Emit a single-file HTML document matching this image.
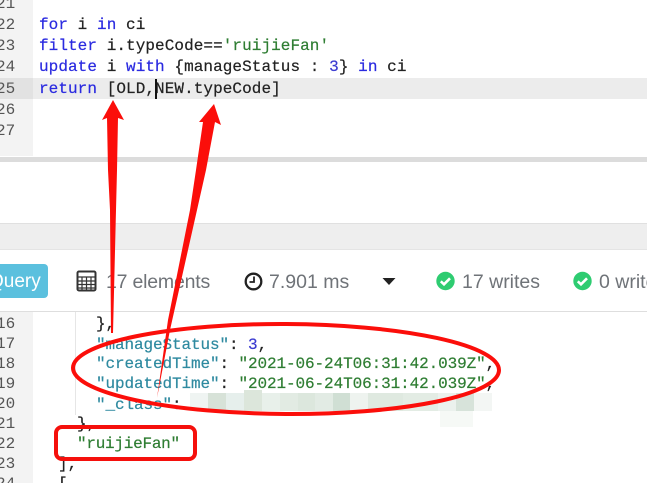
<!DOCTYPE html>
<html><head><meta charset="utf-8">
<style>
html,body{margin:0;padding:0;background:#fff}
#p{position:relative;width:647px;height:483px;overflow:hidden;background:#fff;filter:blur(.3px)}
.a{position:absolute}
.m{position:absolute;font-family:"Liberation Mono",monospace;font-size:16px;line-height:20px;white-space:pre;color:#222;-webkit-text-stroke:.2px currentColor}
.u{letter-spacing:.07px}.b{letter-spacing:-.1px}
.n{position:absolute;font-family:"Liberation Mono",monospace;font-size:16px;line-height:20px;color:#555;left:-4px}
.k{color:#2a2ae0}.s{color:#2e7d32}.j{color:#2f8aa0}.t{position:absolute;font-family:"Liberation Sans",sans-serif;font-size:19.5px;line-height:24px;color:#6f7378;white-space:pre}
</style></head><body><div id="p">
<div class="a" style="left:0;top:0;width:33px;height:156px;background:#f3f3f3"></div>
<div class="a" style="left:0;top:78px;width:647px;height:21px;background:#ececec"></div>
<div class="a" style="left:0;top:78px;width:33px;height:21px;background:#e2e2e2"></div>
<div class="a" style="left:0;top:157px;width:647px;height:5px;background:#dcdcdc"></div>
<div class="n" style="top:-6px">21</div><div class="n" style="top:15px">22</div><div class="n" style="top:36px">23</div><div class="n" style="top:57px">24</div><div class="n" style="top:79px">25</div><div class="n" style="top:100px">26</div><div class="n" style="top:121px">27</div>
<div class="m u" style="left:39px;top:15px"><span class="k">for</span> i <span class="k">in</span> ci</div>
<div class="m u" style="left:39px;top:36px"><span class="k">filter</span> i.typeCode==<span class="s">'ruijieFan'</span></div>
<div class="m u" style="left:39px;top:57px"><span class="k">update</span> i <span class="k">with</span> {manageStatus : <span style="color:#3a3ad0">3</span>} <span class="k">in</span> ci</div>
<div class="m u" style="left:39px;top:79px"><span class="k">return</span> [OLD,NEW.typeCode]</div>
<div class="a" style="left:155px;top:79px;width:1.5px;height:20px;background:#111"></div>

<div class="a" style="left:0;top:223px;width:647px;height:27px;background:#eeeeee;border-top:1px solid #e0e0e0;border-bottom:1px solid #e4e4e4;box-sizing:border-box"></div>
<div class="a" style="left:-20px;top:264px;width:68px;height:34px;background:#5bc0de;border-radius:4px"></div>
<div class="t" style="left:-11px;top:270px;color:#fff;font-size:19px">Query</div>
<svg class="a" style="left:76px;top:270px" width="22" height="23" viewBox="0 0 22 23"><rect x="1.5" y="1.5" width="18" height="19" rx="1.5" fill="none" stroke="#333" stroke-width="2"/><path d="M1 7h19M2 11h17M2 14.500h17M2 18h17M6 7v13M10.500 7v13M15 7v13" stroke="#333" stroke-width="1.200" fill="none"/></svg>
<div class="t" style="left:106px;top:270px;letter-spacing:-.2px">17 elements</div>
<svg class="a" style="left:244px;top:272px" width="19" height="19" viewBox="0 0 19 19"><circle cx="9.500" cy="9.500" r="7.800" fill="none" stroke="#222" stroke-width="2.300"/><path d="M10 4.500v5.500H5.500" fill="none" stroke="#222" stroke-width="1.800"/></svg>
<div class="t" style="left:269px;top:270px">7.901 ms</div>
<svg class="a" style="left:382px;top:277px" width="14" height="9"><path d="M0.500 1h13L7 8z" fill="#222"/></svg>
<svg class="a" style="left:436px;top:271px" width="19" height="20" viewBox="0 0 19 20"><circle cx="9.500" cy="10" r="9.200" fill="#2ecc71"/><path d="M4.800 10.300l3.200 3 6-6" fill="none" stroke="#fff" stroke-width="2.600"/></svg>
<div class="t" style="left:462px;top:270px">17 writes</div>
<svg class="a" style="left:573px;top:271px" width="19" height="20" viewBox="0 0 19 20"><circle cx="9.500" cy="10" r="9.200" fill="#2ecc71"/><path d="M4.800 10.300l3.200 3 6-6" fill="none" stroke="#fff" stroke-width="2.600"/></svg>
<div class="t" style="left:599px;top:270px">0 writes</div>
<div class="a" style="left:0;top:311px;width:647px;height:1px;background:#dedede"></div>

<div class="a" style="left:0;top:312px;width:33px;height:171px;background:#f3f3f3"></div>
<div class="a" style="left:75px;top:312px;width:1px;height:103px;background:#e6e6e6"></div>
<div class="n" style="top:314px">16</div><div class="n" style="top:334px">17</div><div class="n" style="top:354px">18</div><div class="n" style="top:374px">19</div><div class="n" style="top:394px">20</div><div class="n" style="top:414px">21</div><div class="n" style="top:434px">22</div><div class="n" style="top:454px">23</div><div class="n" style="top:474px">24</div>
<div class="m b" style="left:96px;top:314px">},</div>
<div class="m b" style="left:96px;top:335px"><span class="j">"manageStatus"</span>: <span style="color:#3a3ad0">3</span>,</div>
<div class="m b" style="left:96px;top:354px"><span class="j">"createdTime"</span>: <span class="s">"2021-06-24T06:31:42.039Z"</span>,</div>
<div class="m b" style="left:96px;top:374px"><span class="j">"updatedTime"</span>: <span class="s">"2021-06-24T06:31:42.039Z"</span>,</div>
<div class="m b" style="left:96px;top:395px"><span class="j">"_class"</span>:</div>
<div class="m" style="left:77px;top:414px">},</div>
<div class="m" style="left:77px;top:434px;letter-spacing:-.25px"><span class="s">"ruijieFan"</span></div>
<div class="m" style="left:58px;top:454px">],</div>
<div class="m" style="left:58px;top:474px">[</div>

<svg class="a" style="left:0;top:0" width="647" height="483" viewBox="0 0 647 483">
<g opacity=".9">
<rect x="190" y="393" width="18" height="18" fill="#eef3f1"/><rect x="208" y="393" width="18" height="18" fill="#d3dfd4"/><rect x="226" y="393" width="18" height="18" fill="#e4eeea"/><rect x="244" y="390" width="18" height="21" fill="#d9e4d8"/><rect x="262" y="393" width="18" height="18" fill="#e6efe8"/><rect x="280" y="393" width="18" height="18" fill="#dfe9e0"/><rect x="298" y="393" width="17" height="18" fill="#d9e5da"/><rect x="315" y="393" width="18" height="18" fill="#dfe9e2"/><rect x="333" y="393" width="17" height="18" fill="#ccdcd0"/><rect x="350" y="393" width="18" height="18" fill="#edf2ee"/><rect x="368" y="393" width="35" height="18" fill="#dce7dd"/><rect x="403" y="393" width="35" height="18" fill="#e0eae2"/><rect x="438" y="393" width="18" height="18" fill="#e9f0ec"/><rect x="456" y="393" width="18" height="18" fill="#d3e0d6"/><rect x="474" y="393" width="18" height="18" fill="#f2f6f3"/>
<rect x="440" y="411" width="33" height="16" fill="#f6f9f6"/>
</g>
<g fill="#fb0e0a">
<path d="M113 100L124 120L118 118L117 170L116 210L113 333L111 333L110 210L108 170L107 118L102 120Z"/>
<path d="M214 104L221 125L215 122L206 170L197 210L170 330L157 398L168 320L190 210L196 170L203 122L199 122Z"/>
</g>
<ellipse cx="286" cy="369" rx="213" ry="45" fill="none" stroke="#fb0e0a" stroke-width="4" transform="rotate(0.300 286 369)"/>
<rect x="56" y="427" width="139" height="32" rx="6" fill="none" stroke="#f5100c" stroke-width="4"/>
</svg>
</div></body></html>
